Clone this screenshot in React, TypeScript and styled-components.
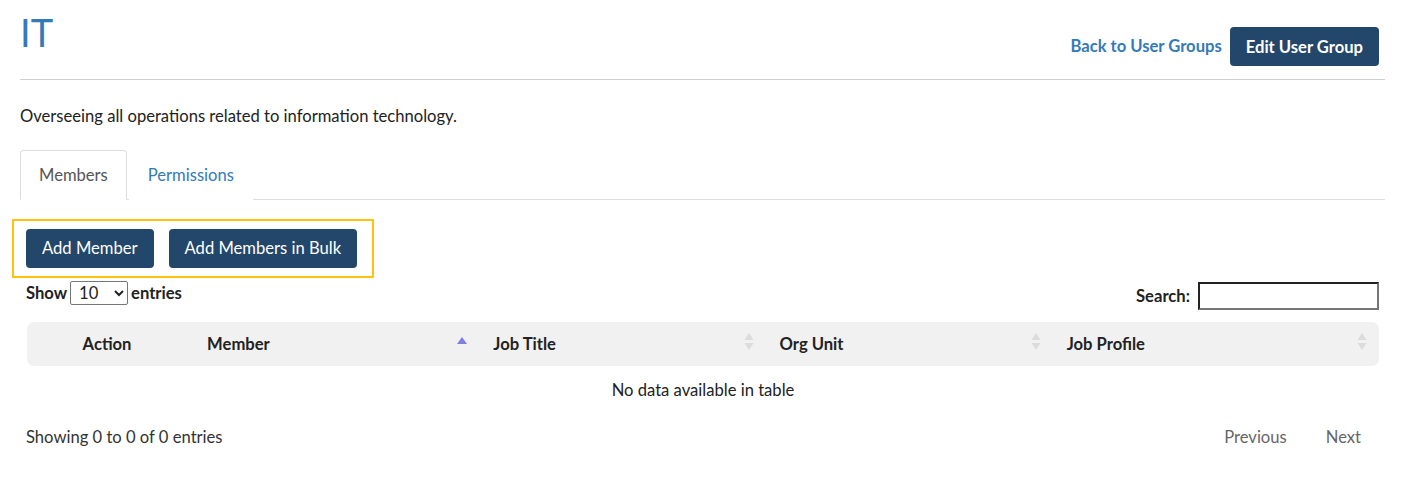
import React from 'react';
import styled, { createGlobalStyle } from 'styled-components';

const GlobalStyle = createGlobalStyle`
  html, body {
    margin: 0;
    padding: 0;
    background: #fff;
  }
  body {
    font-family: Lato, "Open Sans", "Liberation Sans", sans-serif;
    font-size: 16.6px;
    line-height: 22.8px;
    color: #222;
  }
  * {
    box-sizing: border-box;
  }
`;

type SortState = 'asc' | 'none';

interface Column {
  title: string;
  width: number;
  sort?: SortState;
  center?: boolean;
}

const columns: Column[] = [
  { title: 'Action', width: 166, center: true },
  { title: 'Member', width: 286, sort: 'asc' },
  { title: 'Job Title', width: 286, sort: 'none' },
  { title: 'Org Unit', width: 287, sort: 'none' },
  { title: 'Job Profile', width: 326, sort: 'none' },
];

const SortIcon: React.FC<{ state: SortState }> = ({ state }) =>
  state === 'asc' ? (
    <svg width="10" height="20" viewBox="0 0 10 20">
      <polygon points="5,5 10,12 0,12" fill="#7f7fe3" />
    </svg>
  ) : (
    <svg width="10" height="20" viewBox="0 0 10 20">
      <polygon points="5,1 9.5,8 0.5,8" fill="#dcdcdc" />
      <polygon points="0.5,11 9.5,11 5,18" fill="#dcdcdc" />
    </svg>
  );

const App: React.FC = () => {
  return (
    <Page>
      <GlobalStyle />
      <Header>
        <Title>IT</Title>
        <HeaderActions>
          <TextLink href="#">Back to User Groups</TextLink>
          <PrimaryButton $strong>Edit User Group</PrimaryButton>
        </HeaderActions>
      </Header>

      <Description>Overseeing all operations related to information technology.</Description>

      <TabList>
        <Tab $active>Members</Tab>
        <Tab>Permissions</Tab>
      </TabList>

      <Highlight>
        <PrimaryButton>Add Member</PrimaryButton>
        <PrimaryButton>Add Members in Bulk</PrimaryButton>
      </Highlight>

      <TableWrapper>
        <ControlsRow>
          <LengthLabel>
            Show
            <LengthSelect defaultValue="10">
              <option value="10">10</option>
              <option value="25">25</option>
              <option value="50">50</option>
              <option value="100">100</option>
            </LengthSelect>
            entries
          </LengthLabel>
          <SearchLabel>
            Search:
            <SearchInput type="search" />
          </SearchLabel>
        </ControlsRow>

        <DataTable>
          <thead>
            <tr>
              {columns.map((col) => (
                <HeadCell key={col.title} style={{ width: col.width }} $center={col.center}>
                  <HeadInner $center={col.center}>
                    <span>{col.title}</span>
                    {col.sort && <SortIcon state={col.sort} />}
                  </HeadInner>
                </HeadCell>
              ))}
            </tr>
          </thead>
          <tbody>
            <tr>
              <EmptyCell colSpan={columns.length}>No data available in table</EmptyCell>
            </tr>
          </tbody>
        </DataTable>

        <FooterRow>
          <Info>Showing 0 to 0 of 0 entries</Info>
          <Pager>
            <PageButton>Previous</PageButton>
            <PageButton>Next</PageButton>
          </Pager>
        </FooterRow>
      </TableWrapper>
    </Page>
  );
};

export default App;

const Page = styled.div`
  padding: 0 23px 20px 20px;
`;

const Header = styled.div`
  display: flex;
  justify-content: space-between;
  height: 80px;
  padding: 10px 6px 13px 0;
  border-bottom: 1px solid #cfcfcf;
`;

const Title = styled.h1`
  margin: 0;
  align-self: flex-start;
  font-size: 38px;
  font-weight: 400;
  line-height: 1.2;
  color: #337ab7;
`;

const HeaderActions = styled.div`
  display: flex;
  align-items: center;
  align-self: flex-end;
  gap: 8px;
`;

const TextLink = styled.a`
  color: #337ab7;
  font-weight: 700;
  text-decoration: none;
`;

const PrimaryButton = styled.button<{ $strong?: boolean }>`
  height: 39px;
  padding: 0 16px;
  border: none;
  border-radius: 4px;
  background: #23466b;
  color: #fff;
  font-family: inherit;
  font-size: 16.6px;
  font-weight: ${(p) => (p.$strong ? 700 : 400)};
  cursor: pointer;
`;

const Description = styled.p`
  margin: 25px 0 0;
`;

const TabList = styled.div`
  display: flex;
  margin-top: 22px;
  border-bottom: 1px solid #ddd;
`;

const Tab = styled.div<{ $active?: boolean }>`
  display: flex;
  align-items: center;
  height: 50px;
  margin: 0 2px -1px 0;
  padding: 1px 18px 0;
  border: 1px solid ${(p) => (p.$active ? '#ddd' : 'transparent')};
  border-bottom-color: ${(p) => (p.$active ? '#fff' : 'transparent')};
  border-radius: 4px 4px 0 0;
  background: #fff;
  color: ${(p) => (p.$active ? '#555' : '#337ab7')};
  cursor: pointer;
`;

const Highlight = styled.div`
  display: inline-flex;
  gap: 15px;
  margin: 19px 0 0 -8px;
  padding: 8px 15px 8px 12px;
  border: 2px solid #ffc20e;
`;

const TableWrapper = styled.div`
  padding: 0 6px 0 6px;
`;

const ControlsRow = styled.div`
  display: flex;
  justify-content: space-between;
  align-items: flex-start;
  margin-top: 3px;
`;

const LengthLabel = styled.label`
  display: flex;
  align-items: center;
  gap: 3px;
  font-weight: 700;
  line-height: 24px;
`;

const SearchLabel = styled(LengthLabel)`
  margin-top: 1px;
  gap: 8px;
`;

const LengthSelect = styled.select`
  width: 58px;
  height: 24px;
  padding: 0 4px;
  border: 1px solid #767676;
  border-radius: 2px;
  background: #fff;
  font-family: inherit;
  font-size: 16.6px;
  color: #222;
`;

const SearchInput = styled.input`
  width: 181px;
  height: 28px;
  border: 2px solid #222;
  border-right-color: #767676;
  border-bottom-color: #767676;
  padding: 0 4px;
  font-family: inherit;
  font-size: 16px;
  outline: none;
`;

const DataTable = styled.table`
  width: calc(100% - 1px);
  margin: 12px 0 0 1px;
  border-collapse: separate;
  border-spacing: 0;
  table-layout: fixed;
`;

const HeadCell = styled.th<{ $center?: boolean }>`
  height: 44px;
  padding: ${(p) => (p.$center ? '1px 20px 0 14px' : '1px 12px 0 14px')};
  background: #f1f1f1;
  font-weight: 700;
  text-align: ${(p) => (p.$center ? 'center' : 'left')};

  &:first-child {
    border-radius: 7px 0 0 7px;
  }
  &:last-child {
    border-radius: 0 7px 7px 0;
  }
`;

const HeadInner = styled.div<{ $center?: boolean }>`
  display: flex;
  align-items: center;
  justify-content: ${(p) => (p.$center ? 'center' : 'space-between')};

  svg {
    margin-top: -4px;
  }
`;

const EmptyCell = styled.td`
  padding: 13px 10px 11px;
  text-align: center;
`;

const FooterRow = styled.div`
  display: flex;
  justify-content: space-between;
  align-items: center;
  margin-top: 11px;
`;

const Info = styled.div`
  color: #333;
`;

const Pager = styled.div`
  display: flex;
  gap: 3px;
`;

const PageButton = styled.span`
  padding: 2px 18px;
  color: #666;
  cursor: default;
`;
